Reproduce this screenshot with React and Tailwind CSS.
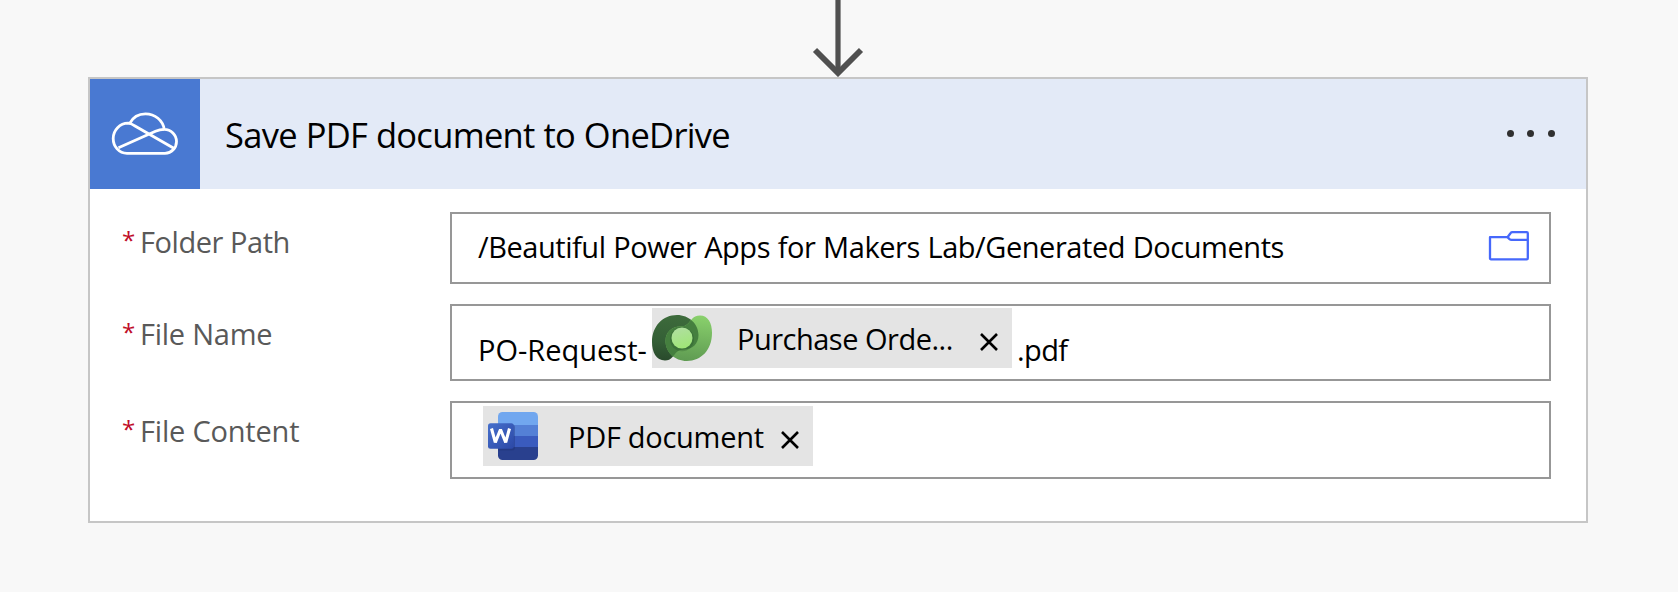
function ConnectorArrow() {
  return (
    <svg className="ml-[808px] block h-[77px] w-[60px]" viewBox="0 0 60 77" fill="none" stroke="#505050">
      <path d="M30 0V73" strokeWidth="5.2" />
      <path d="M7 50L30 73L53 50" strokeWidth="5.8" />
    </svg>
  );
}

function OneDriveIcon() {
  return (
    <svg className="h-[60px] w-[80px]" viewBox="0 0 80 60" fill="none" stroke="#fff" strokeWidth="2.8" strokeLinejoin="round">
      <path d="M22 48.3C14 48.3 8.2 41.5 8.2 33.5C8.2 25 15 18.2 23 18.2L24.7 18.3C28 12 34 8.8 40.5 8.8C50 8.8 58 15.5 59.2 24.3C66 24.3 71.5 29.8 71.5 36.5C71.5 43 66.5 48.3 60 48.3Z" />
      <path d="M24.7 18.3C27 19.2 28 19.8 30 21L68.8 43.3M13.5 42.8L50.5 26.3C53.5 24.9 55.5 24.3 59.2 24.3" />
    </svg>
  );
}

function FolderIcon() {
  return (
    <svg className="h-[32px] w-[42px]" viewBox="0 0 42 32" fill="none" stroke="#4668fb" strokeWidth="2.3" strokeLinejoin="round">
      <path d="M2 7.2H19.5L22.5 3.2Q23.2 2.2 24.5 2.2H38.7Q39.8 2.2 39.8 3.2V28.2Q39.8 29.3 38.7 29.3H3Q2 29.3 2 28.3Z" />
      <path d="M19.5 7.2L21.5 9.1Q22.3 9.8 23.5 9.8H39.5" />
    </svg>
  );
}

function DataverseIcon() {
  return (
    <svg className="h-[60px] w-[60px]" viewBox="0 0 60 60">
      <defs>
        <linearGradient id="dvDark" x1="0.4" y1="0" x2="0.3" y2="1">
          <stop offset="0" stopColor="#3d6b3b" />
          <stop offset="0.6" stopColor="#345f36" />
          <stop offset="1" stopColor="#294a2c" />
        </linearGradient>
        <linearGradient id="dvLight" x1="0.6" y1="0" x2="0.5" y2="1">
          <stop offset="0" stopColor="#89d06c" />
          <stop offset="1" stopColor="#5f9b52" />
        </linearGradient>
        <linearGradient id="dvCore" x1="0.3" y1="0" x2="0.6" y2="1">
          <stop offset="0" stopColor="#b0dfa0" />
          <stop offset="1" stopColor="#9fe676" />
        </linearGradient>
        <clipPath id="dvClip">
          <path d="M13 52.5C4 52.5 0 44 0 34C0 18 11 7 25 7C37 7 46.5 16 46.5 27C46.5 36 40 41.5 32 41.5C25.5 41.5 24 45 20.5 49C18.5 51.5 16 52.5 13 52.5Z" />
        </clipPath>
      </defs>
      <path d="M13 52.5C4 52.5 0 44 0 34C0 18 11 7 25 7C37 7 46.5 16 46.5 27C46.5 36 40 41.5 32 41.5C25.5 41.5 24 45 20.5 49C18.5 51.5 16 52.5 13 52.5Z" fill="url(#dvDark)" />
      <path d="M48 7.5C56 7.5 60 15 60 25C60 42 49 53 35 53C22.5 53 13.5 44 13.5 33C13.5 24 20 18.5 28 18.5C35 18.5 36.5 15 39.5 11.5C41.5 9 44.5 7.5 48 7.5Z" fill="url(#dvLight)" />
      <path d="M48 7.5C56 7.5 60 15 60 25C60 42 49 53 35 53C22.5 53 13.5 44 13.5 33C13.5 24 20 18.5 28 18.5C35 18.5 36.5 15 39.5 11.5C41.5 9 44.5 7.5 48 7.5Z" fill="#457f3f" clipPath="url(#dvClip)" />
      <circle cx="30" cy="31.2" r="12" fill="#214b24" opacity="0.25" />
      <circle cx="30" cy="30" r="10.5" fill="url(#dvCore)" />
    </svg>
  );
}

function WordIcon() {
  return (
    <svg className="h-[60px] w-[60px]" viewBox="0 0 60 60">
      <defs>
        <clipPath id="wordPage">
          <rect x="15" y="6" width="40" height="48" rx="4.5" />
        </clipPath>
        <linearGradient id="wordTile" x1="0" y1="0" x2="1" y2="1">
          <stop offset="0" stopColor="#4670cc" />
          <stop offset="1" stopColor="#2c48a6" />
        </linearGradient>
      </defs>
      <g clipPath="url(#wordPage)">
        <path d="M15 6H55V19H15Z" fill="#71a7ef" />
        <path d="M15 19H55V30H15Z" fill="#5480d6" />
        <path d="M15 30H55V41H15Z" fill="#3a5bbe" />
        <path d="M15 41H55V54H15Z" fill="#29408e" />
        <rect x="5" y="18.5" width="27" height="26" rx="3" fill="#1c2f70" opacity="0.35" />
      </g>
      <rect x="5" y="17.3" width="25.8" height="25.5" rx="2.5" fill="url(#wordTile)" />
      <path d="M8.5 22.5L12.3 36.3L17.5 23.5L22.7 36.3L26.5 22.5" fill="none" stroke="#fff" strokeWidth="3.1" strokeLinejoin="bevel" />
    </svg>
  );
}

function RemoveIcon() {
  return (
    <svg className="h-[18px] w-[18px]" viewBox="0 0 18 18" fill="none" stroke="#000" strokeWidth="2.6">
      <path d="M1 1L17 17M17 1L1 17" />
    </svg>
  );
}

function Field({ label, tracking, box, children }) {
  return (
    <div className="flex items-start">
      <div className="-ml-[2px] flex w-[328px] pt-[10px] text-[29px] leading-[40px] text-[#595959]">
        <span className="w-[18px] text-[24px] leading-[36px] font-medium text-[#c00d28]">*</span>
        <span className={tracking}>{label}</span>
      </div>
      <div className={`flex w-[1101px] items-start border-2 border-[#979797] bg-white text-[29px] leading-[40px] whitespace-nowrap text-black ${box}`}>
        {children}
      </div>
    </div>
  );
}

export default function App() {
  return (
    <div className="h-[592px] w-[1678px] overflow-hidden bg-[#f8f8f8] font-['Open_Sans',sans-serif]">
      <ConnectorArrow />
      <div className="ml-[88px] h-[446px] w-[1500px] border-2 border-[#c6c6c6] bg-white">
        <header className="flex h-[110px] items-center bg-[#e3eaf7]">
          <div className="flex h-[110px] w-[110px] items-center justify-center bg-[#4979d2] pt-[2px]">
            <OneDriveIcon />
          </div>
          <h1 className="grow pt-px pl-[25px] text-[34.5px] leading-[109px] tracking-[-0.7px] [word-spacing:0.5px] whitespace-nowrap text-black">
            Save PDF document to OneDrive
          </h1>
          <div className="mr-[31px] flex gap-[13.6px] pb-px">
            <span className="size-[7px] rounded-full bg-[#303030]" />
            <span className="size-[7px] rounded-full bg-[#303030]" />
            <span className="size-[7px] rounded-full bg-[#303030]" />
          </div>
        </header>

        <div className="flex flex-col gap-[20px] pt-[23px] pl-[34px]">
          <Field label="Folder Path" tracking="tracking-[-0.45px]" box="h-[72px] justify-between pt-[13px] pr-[19px] pl-[26px]">
            <span className="tracking-[-0.45px] [word-spacing:0.6px]">/Beautiful Power Apps for Makers Lab/Generated Documents</span>
            <span className="pt-[3px]"><FolderIcon /></span>
          </Field>

          <Field label="File Name" tracking="tracking-[-0.25px]" box="h-[77px] pl-[26px]">
            <span className="w-[174px] pt-[24px]">PO-Request-</span>
            <span className="mt-[2px] flex h-[60px] w-[360px] bg-[#e4e4e4]">
              <DataverseIcon />
              <span className="w-[268px] pt-[11px] pl-[25px] tracking-[-0.5px]">Purchase Orde...</span>
              <span className="pt-[25px]"><RemoveIcon /></span>
            </span>
            <span className="pt-[24px] pl-[5px] tracking-[-0.6px]">.pdf</span>
          </Field>

          <Field label="File Content" tracking="tracking-[-0.2px]" box="h-[78px] pl-[31px]">
            <span className="mt-[3px] flex h-[60px] w-[330px] bg-[#e4e4e4]">
              <WordIcon />
              <span className="w-[238px] pt-[11px] pl-[25px] tracking-[-0.28px]">PDF document</span>
              <span className="pt-[25px]"><RemoveIcon /></span>
            </span>
          </Field>
        </div>
      </div>
    </div>
  );
}
